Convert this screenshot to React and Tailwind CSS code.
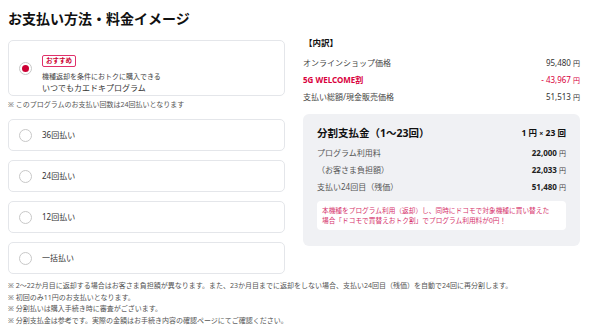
import React from 'react'

const font = { fontFamily: '"Noto Sans", "Noto Sans CJK JP", sans-serif' };

const options = ["36回払い", "24回払い", "12回払い", "一括払い"];

export default function App() {
    return (
        <div className="w-[590px] h-[330px] bg-white pl-[8px] pr-[10px] overflow-hidden text-[#333]" style={font}>
            <h1 className="text-[14px] font-bold text-[#111] leading-none pt-[12px] h-[40px]">お支払い方法・料金イメージ</h1>

            <div className="flex gap-[18px]">
                {/* left column */}
                <div className="w-[277px]">
                    <div className="h-[56px] rounded-[5px] border border-[#e4e6ea] flex items-center pl-[10px] gap-[10px]">
                        <div className="w-[13px] h-[13px] rounded-full border border-[#c8c8c8] flex items-center justify-center">
                            <div className="w-[7px] h-[7px] rounded-full bg-[#cc0033]" />
                        </div>
                        <div className="pt-[1px]">
                            <span className="inline-flex items-center h-[12px] border border-[#e0306a] text-[#cc0033] rounded-[2px] text-[6.5px] font-bold leading-none px-[3px]">おすすめ</span>
                            <div className="text-[7px] leading-none mt-[4px] text-[#444]">機種返却を条件におトクに購入できる</div>
                            <div className="text-[8px] leading-none mt-[4px] text-[#333]">いつでもカエドキプログラム</div>
                        </div>
                    </div>
                    <div className="text-[7px] text-[#555] leading-none mt-[5px] h-[18px]">※ このプログラムのお支払い回数は24回払いとなります</div>

                    <div className="flex flex-col gap-[9px]">
                        {options.map((o) => (
                            <div key={o} className="h-[32px] rounded-[5px] border border-[#e4e6ea] flex items-center pl-[10px] gap-[10px]">
                                <div className="w-[13px] h-[13px] rounded-full border border-[#c8c8c8]" />
                                <span className="text-[8px] text-[#333]">{o}</span>
                            </div>
                        ))}
                    </div>
                </div>

                {/* right column */}
                <div className="w-[277px] -mt-[1px]">
                    <div className="text-[8.5px] font-bold text-[#111] leading-none pl-[1px]">【内訳】</div>
                    <div className="mt-[7px] text-[8px] leading-none">
                        <div className="flex justify-between h-[17px] items-center">
                            <span className="text-[#444]">オンラインショップ価格</span>
                            <span className="text-[#333]">95,480 <span className="text-[7px]">円</span></span>
                        </div>
                        <div className="flex justify-between h-[17px] items-center text-[#d9003d]">
                            <span className="font-bold">5G WELCOME割</span>
                            <span>- 43,967 <span className="text-[7px]">円</span></span>
                        </div>
                        <div className="flex justify-between h-[17px] items-center">
                            <span className="text-[#444]">支払い総額/現金販売価格</span>
                            <span className="text-[#333]">51,513 <span className="text-[7px]">円</span></span>
                        </div>
                    </div>

                    <div className="mt-[8px] h-[132px] rounded-[6px] bg-[#f0f1f4] px-[14px] pt-[14px]">
                        <div className="flex justify-between items-center leading-none">
                            <span className="text-[10.5px] font-bold text-[#111]">分割支払金（1〜23回）</span>
                            <span className="text-[8.5px] font-bold text-[#111]">1 円 <span className="text-[7px]">×</span> 23 回</span>
                        </div>
                        <div className="mt-[6px] text-[8px] leading-none">
                            <div className="flex justify-between h-[17px] items-center">
                                <span className="text-[#555]">プログラム利用料</span>
                                <span className="font-bold text-[#222]">22,000 <span className="font-normal text-[7px] text-[#444]">円</span></span>
                            </div>
                            <div className="flex justify-between h-[17px] items-center">
                                <span className="text-[#555]">（お客さま負担額）</span>
                                <span className="font-bold text-[#222]">22,033 <span className="font-normal text-[7px] text-[#444]">円</span></span>
                            </div>
                            <div className="flex justify-between h-[17px] items-center">
                                <span className="text-[#555]">支払い24回目（残価）</span>
                                <span className="font-bold text-[#222]">51,480 <span className="font-normal text-[7px] text-[#444]">円</span></span>
                            </div>
                        </div>
                        <div className="mt-[6px] h-[29px] rounded-[4px] bg-white px-[5px] pt-[5px] text-[6.7px] leading-[10px] text-[#d6336c]">
                            <div>本機種をプログラム利用（返却）し、同時にドコモで対象機種に買い替えた</div>
                            <div>場合「ドコモで買替えおトク割」でプログラム利用料が0円！</div>
                        </div>
                    </div>
                </div>
            </div>

            <div className="mt-[8px] text-[7px] text-[#555] leading-none flex flex-col gap-[4.7px]">
                <div>※ 2〜22か月目に返却する場合はお客さま負担額が異なります。また、23か月目までに返却をしない場合、支払い24回目（残価）を自動で24回に再分割します。</div>
                <div>※ 初回のみ11円のお支払いとなります。</div>
                <div>※ 分割払いは購入手続き時に審査がございます。</div>
                <div>※ 分割支払金は参考です。実際の金額はお手続き内容の確認ページにてご確認ください。</div>
            </div>
        </div>
    )
}
